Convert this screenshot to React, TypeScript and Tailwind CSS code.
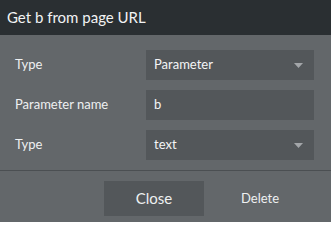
import React from "react";

function Caret() {
  return (
    <svg width="9" height="5" viewBox="0 0 9 5" className="shrink-0">
      <path d="M0 0 L9 0 L4.5 5 Z" fill="#a3a6a9" />
    </svg>
  );
}

function Row({ label, value, select }: { label: string; value: string; select?: boolean }) {
  return (
    <div className="flex items-center h-[30px]">
      <div className="w-[146px] pl-[15px] text-[13px] text-[#eef0f1]">{label}</div>
      <div className="w-[168px] h-[30px] bg-[#53575a] flex items-center pl-[8px] pr-[11px] text-[13px] text-[#f4f5f6]">
        <span className="flex-1">{value}</span>
        {select && <Caret />}
      </div>
    </div>
  );
}

export default function App() {
  return (
    <div
      className="w-[331px] h-[222px] bg-[#63676a] flex flex-col"
      style={{ fontFamily: 'Lato, "Open Sans", sans-serif' }}
    >
      <div className="h-[35px] bg-[#2a2f32] flex items-center pl-[7px] text-[15px] text-[#f2f3f4]">
        Get b from page URL
      </div>
      <div className="flex flex-col gap-[10px] pt-[15px] h-[135px]">
        <Row label="Type" value="Parameter" select />
        <Row label="Parameter name" value="b" />
        <Row label="Type" value="text" select />
      </div>
      <div className="h-px bg-[#4b4f52]" />
      <div className="flex items-center pt-[10px]">
        <div className="ml-[104px] w-[100px] h-[35px] bg-[#53575a] flex items-center justify-center text-[15px] text-[#eef0f1]">
          Close
        </div>
        <div className="ml-[37px] text-[13px] text-[#eef0f1]">Delete</div>
      </div>
    </div>
  );
}
